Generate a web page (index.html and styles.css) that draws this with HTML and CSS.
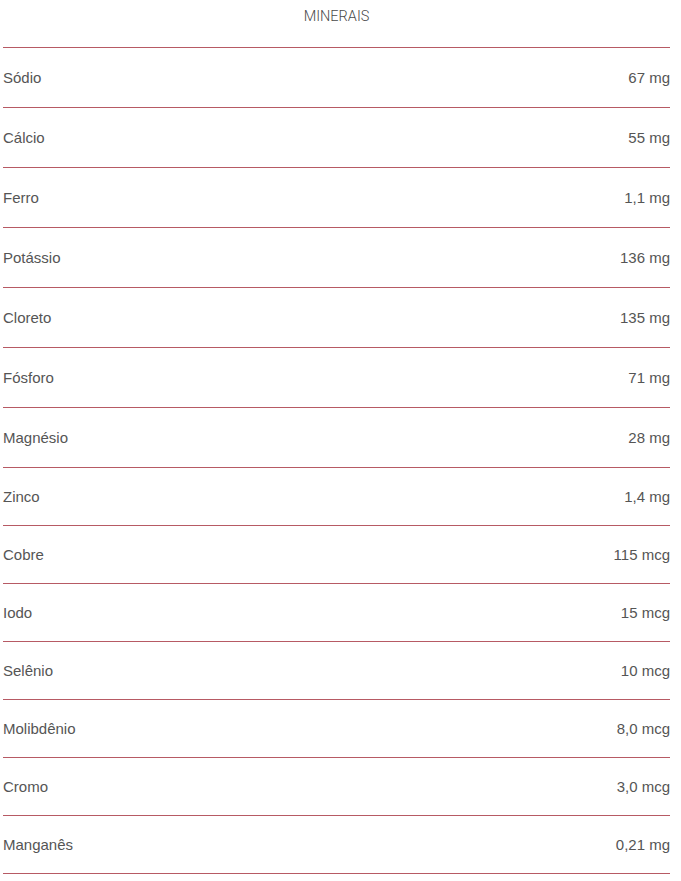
FILE: index.html
```html
<!DOCTYPE html>
<html lang="pt">
<head>
<meta charset="utf-8">
<link rel="stylesheet" href="styles.css">
</head>
<body>
<div class="panel">
  <h2 class="title">MINERAIS</h2>
  <ul class="list">
    <li class="row"><span>Sódio</span><span>67 mg</span></li>
    <li class="row"><span>Cálcio</span><span>55 mg</span></li>
    <li class="row"><span>Ferro</span><span>1,1 mg</span></li>
    <li class="row"><span>Potássio</span><span>136 mg</span></li>
    <li class="row"><span>Cloreto</span><span>135 mg</span></li>
    <li class="row"><span>Fósforo</span><span>71 mg</span></li>
    <li class="row"><span>Magnésio</span><span>28 mg</span></li>
    <li class="row short"><span>Zinco</span><span>1,4 mg</span></li>
    <li class="row short"><span>Cobre</span><span>115 mcg</span></li>
    <li class="row short"><span>Iodo</span><span>15 mcg</span></li>
    <li class="row short"><span>Selênio</span><span>10 mcg</span></li>
    <li class="row short"><span>Molibdênio</span><span>8,0 mcg</span></li>
    <li class="row short"><span>Cromo</span><span>3,0 mcg</span></li>
    <li class="row short"><span>Manganês</span><span>0,21 mg</span></li>
  </ul>
</div>
</body>
</html>
```

FILE: styles.css
```css
html, body {
  margin: 0;
  padding: 0;
  background: #ffffff;
}
.panel {
  margin-left: 3px;
  width: 667px;
}
.title {
  margin: 0;
  height: 47px;
  box-sizing: border-box;
  padding-top: 8px;
  text-align: center;
  font-family: Roboto, "Liberation Sans", sans-serif;
  font-weight: 300;
  font-size: 14.5px;
  line-height: 17px;
  color: #4a4a4a;
}
.list {
  list-style: none;
  margin: 0;
  padding: 0;
  border-top: 1px solid #b75a64;
}
.row {
  display: flex;
  justify-content: space-between;
  align-items: center;
  height: 59px;
  border-bottom: 1px solid #b75a64;
  font-family: "Liberation Sans", Arial, sans-serif;
  font-size: 15px;
  color: #555555;
}
.row.short {
  height: 57px;
}
```
